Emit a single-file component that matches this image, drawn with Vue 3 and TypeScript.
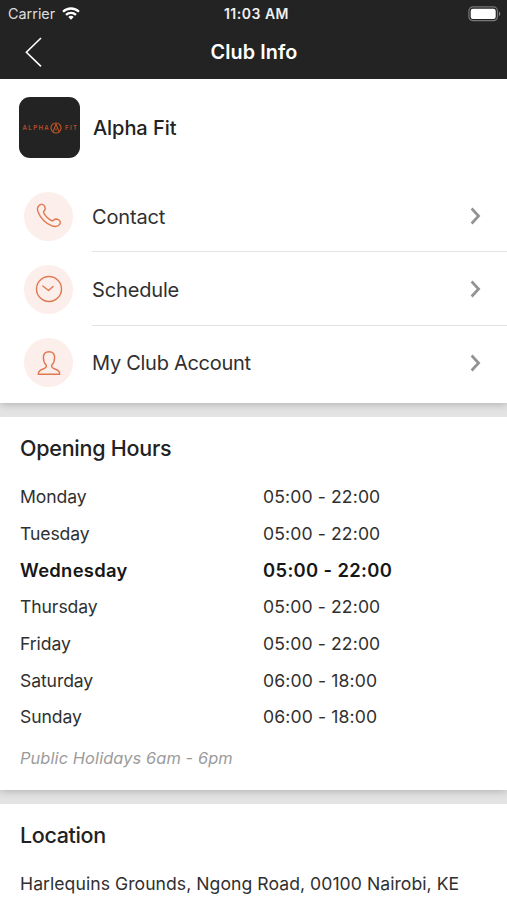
<script setup lang="ts">
interface MenuItem {
  id: 'contact' | 'schedule' | 'account'
  label: string
}

interface OpeningDay {
  day: string
  hours: string
  today?: boolean
}

const menu: MenuItem[] = [
  { id: 'contact', label: 'Contact' },
  { id: 'schedule', label: 'Schedule' },
  { id: 'account', label: 'My Club Account' },
]

const days: OpeningDay[] = [
  { day: 'Monday', hours: '05:00 - 22:00' },
  { day: 'Tuesday', hours: '05:00 - 22:00' },
  { day: 'Wednesday', hours: '05:00 - 22:00', today: true },
  { day: 'Thursday', hours: '05:00 - 22:00' },
  { day: 'Friday', hours: '05:00 - 22:00' },
  { day: 'Saturday', hours: '06:00 - 18:00' },
  { day: 'Sunday', hours: '06:00 - 18:00' },
]
</script>

<template>
  <div class="screen">
    <header class="header">
      <div class="status">
        <div class="carrier">
          <span>Carrier</span>
          <svg class="wifi" width="18" height="13" viewBox="0 0 18 13" fill="none" stroke="#fff" stroke-width="2.3">
            <path d="M1 4.8a11.4 11.4 0 0 1 16 0" />
            <path d="M4 7.9a7.1 7.1 0 0 1 10 0" />
            <path d="M9 12.7 6.3 10a3.9 3.9 0 0 1 5.4 0Z" fill="#fff" stroke="none" />
          </svg>
        </div>
        <span class="time">11:03 AM</span>
        <svg class="battery" width="33" height="16" viewBox="0 0 33 16">
          <rect x="0.9" y="0.9" width="28.6" height="13.8" rx="4" fill="none" stroke="#777" stroke-width="1.2" />
          <rect x="2.7" y="2.7" width="25" height="10.2" rx="2.2" fill="#fff" />
          <path d="M31 5.5c1.7.8 1.7 3.8 0 4.6Z" fill="#888" />
        </svg>
      </div>
      <nav class="nav">
        <svg class="back" width="18" height="32" viewBox="0 0 18 32" fill="none" stroke="#fff" stroke-width="1.6">
          <path d="M17 2 2.4 16.2 17 30.4" />
        </svg>
        <h1 class="nav-title">Club Info</h1>
      </nav>
    </header>

    <section class="card club">
      <div class="identity">
        <div class="logo">
          <span>ALPHA</span>
          <svg width="12" height="12" viewBox="0 0 12 12" fill="none" stroke="#c75626" stroke-width="1.1">
            <circle cx="6" cy="6" r="5" />
            <path d="M3 9.6 6 2.2l3 7.4M6 6.4v2" />
          </svg>
          <span class="fit">FIT</span>
        </div>
        <h2 class="club-name">Alpha Fit</h2>
      </div>
      <ul class="menu">
        <li v-for="item in menu" :key="item.id" class="menu-item">
          <span class="bubble">
            <svg width="30" height="30" viewBox="0 0 30 30" fill="none" stroke="#df7951" stroke-width="1.4" stroke-linejoin="round" stroke-linecap="round">
              <path
                v-if="item.id === 'contact'"
                d="M5.1 4.4C7 2.8 9.6 3 10.6 5.2c.9 2 .9 3.5-.4 4.6-1.2 1-.9 1.8.3 3.5 1.6 2.2 3.5 4.1 5.7 5.6 1.7 1.2 2.6 1.2 3.6.1 1.1-1.3 2.7-1.3 4.6-.3 2.1 1.1 2.5 3 1.2 4.7-1.8 2.4-4.9 2.6-8.1 1.3-5.8-2.5-11-7.8-13.3-13.4-1.2-2.8-1-5.2.9-6.9Z"
              />
              <g v-else-if="item.id === 'schedule'">
                <circle cx="15" cy="15" r="12.5" />
                <path d="m8.8 12 5.8 4.5 4.4-4" />
              </g>
              <path
                v-else
                d="M15 3.8c-3.3 0-5.6 2.3-5.6 5.9 0 3.2 1.1 5.8 2.9 7.5.5 2.2-.6 2.9-3.2 3.8-3.3 1.1-4.8 2.2-4.9 5.2h21.6c-.1-3-1.6-4.1-4.9-5.2-2.6-.9-3.7-1.6-3.2-3.8 1.8-1.7 2.9-4.3 2.9-7.5 0-3.6-2.3-5.9-5.6-5.9Z"
              />
            </svg>
          </span>
          <div class="menu-body">
            <span :class="['menu-label', item.id]">{{ item.label }}</span>
            <svg width="12" height="18" viewBox="0 0 12 18" fill="none" stroke="#929292" stroke-width="2.7">
              <path d="m1.6 1.5 7 7.5-7 7.5" />
            </svg>
          </div>
        </li>
      </ul>
    </section>

    <section class="card hours">
      <h2 class="heading">Opening Hours</h2>
      <dl class="days">
        <div v-for="entry in days" :key="entry.day" :class="['day', { today: entry.today }]">
          <dt>{{ entry.day }}</dt>
          <dd>{{ entry.hours }}</dd>
        </div>
      </dl>
      <p class="note">Public Holidays 6am - 6pm</p>
    </section>

    <section class="card location">
      <h2 class="heading place">Location</h2>
      <p class="address">Harlequins Grounds, Ngong Road, 00100 Nairobi, KE</p>
    </section>
  </div>
</template>

<style>
body {
  background: #fff;
}
</style>

<style scoped>
.screen {
  height: 900px;
  overflow: hidden;
  display: flex;
  flex-direction: column;
  gap: 14px;
  background: #e3e3e3;
  color: #303030;
  font-family: Inter, "Liberation Sans", sans-serif;
  white-space: nowrap;
}

h1,
h2,
p,
ul,
dl,
dd {
  margin: 0;
  padding: 0;
}

.header {
  height: 79px;
  flex: none;
  margin-bottom: -14px;
  background: #232323;
  color: #fff;
}

.status {
  display: grid;
  grid-template-columns: 1fr auto 1fr;
  align-items: center;
  height: 27px;
  padding: 0 6px 0 8px;
}

.carrier {
  display: flex;
  align-items: center;
  gap: 7px;
  font-size: 14.4px;
  color: #dedede;
}

.time {
  padding-left: 4px;
  font-size: 14px;
  font-weight: 600;
  letter-spacing: 0.5px;
  color: #f0f0f0;
}

.battery {
  justify-self: end;
}

.nav {
  display: grid;
  grid-template-columns: 1fr auto 1fr;
  align-items: center;
  height: 50px;
  padding: 0 24px;
}

.nav-title {
  padding-left: 1px;
  font-size: 19.8px;
  font-weight: 600;
  letter-spacing: 0.1px;
}

.card {
  flex: none;
  background: #fff;
  box-shadow: 0 1px 8px rgba(0, 0, 0, 0.24);
  clip-path: inset(0 0 -14px 0);
}

.club {
  height: 324px;
}

.identity {
  display: flex;
  align-items: center;
  gap: 13px;
  padding: 18px 19px 0;
}

.logo {
  display: flex;
  align-items: center;
  justify-content: center;
  box-sizing: border-box;
  width: 61px;
  height: 61px;
  padding-left: 2px;
  border-radius: 11px;
  background: #232323;
  color: #b65028;
  font-size: 6px;
  font-weight: 600;
  letter-spacing: 1.4px;
}

.fit {
  margin-left: 3px;
}

.club-name {
  padding-top: 1px;
  font-size: 20px;
  font-weight: 500;
  letter-spacing: -0.06px;
  color: #222;
}

.menu {
  padding-top: 21px;
  list-style: none;
}

.menu-item {
  display: flex;
  align-items: center;
  gap: 19px;
  height: 73.3px;
  padding-left: 24px;
}

.bubble {
  display: grid;
  place-items: center;
  width: 49px;
  height: 49px;
  margin-top: 1px;
  border-radius: 50%;
  background: #fceeea;
}

.menu-body {
  display: flex;
  flex: 1;
  align-items: center;
  justify-content: space-between;
  height: 100%;
  box-sizing: border-box;
  padding-top: 1px;
  padding-right: 25px;
}

.menu-item:not(:last-child) .menu-body {
  border-bottom: 1px solid #e2e2e2;
}

.menu-label {
  padding-top: 2px;
  font-size: 20px;
  letter-spacing: -0.15px;
}

.menu-label.account {
  padding-top: 1px;
  letter-spacing: -0.28px;
}

.hours {
  height: 373px;
}

.heading {
  padding: 17px 20px 0;
  font-size: 21.5px;
  font-weight: 500;
  letter-spacing: -0.25px;
  line-height: 28px;
  color: #222;
}

.heading.place {
  letter-spacing: -0.35px;
}

.days {
  padding: 16.5px 20px 0;
}

.day {
  display: grid;
  grid-template-columns: 243px 1fr;
  align-items: center;
  height: 36.65px;
  font-size: 17.6px;
}

.day dt {
  letter-spacing: -0.1px;
}

.day dd {
  letter-spacing: 0.12px;
}

.day.today {
  font-size: 18.4px;
  font-weight: 600;
  color: #171717;
}

.day.today dt {
  letter-spacing: 0.3px;
}

.day.today dd {
  letter-spacing: 0.35px;
}

.note {
  padding: 11px 20px 0;
  font-size: 16.4px;
  font-style: italic;
  letter-spacing: 0.1px;
  line-height: 24px;
  color: #9b9b9b;
}

.location {
  height: 120px;
}

.address {
  padding: 23px 20px 0;
  font-size: 17.6px;
  letter-spacing: 0.05px;
  line-height: 24px;
}
</style>
